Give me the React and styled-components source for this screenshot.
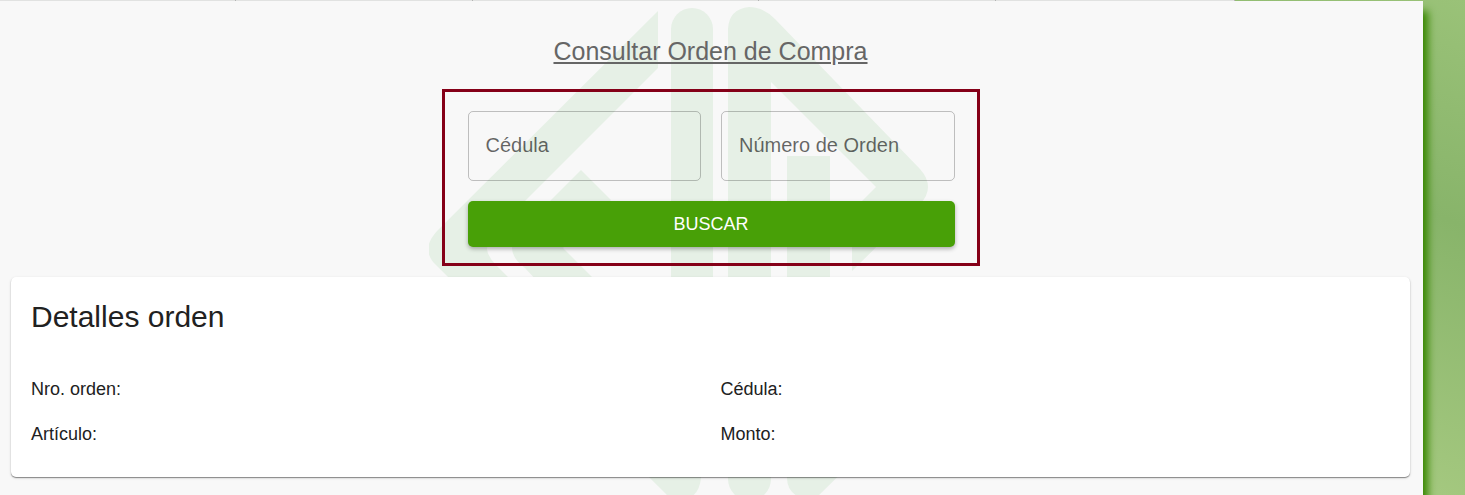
import React, {useState} from 'react'
import styled, {createGlobalStyle} from 'styled-components'

const tabs = [235, 236, 286, 236, 238]

const details = ['Nro. orden:', 'Cédula:', 'Artículo:', 'Monto:']

const Field = ({id, label, value, onChange}) => (
    <FieldContainer>
        <FieldInput id={id} value={value} onChange={e => onChange(e.target.value)}/>
        <FieldLabel htmlFor={id} $hidden={value !== ''}>{label}</FieldLabel>
    </FieldContainer>
)

const Logo = () => (
    <LogoLayer aria-hidden="true">
        <svg width="566" height="506" viewBox="429 1 566 506" fill="#e6f0e6">
            <path d="M658 11V68L501 225Q487 237 487 249Q488 257 496 265L701 470V478Q699 499 680 500Q670 499 665 493L437 266Q428 258 428 248Q429 240 437 231Z"/>
            <path d="M581 170L611 200L563 248L671 356V424L525 268Q512 258 512 248Q512 240 522 229Z"/>
            <path d="M671 29A21 21 0 0 1 713 29V440H671Z"/>
            <path d="M728 29Q729 9 749 7Q763 7 775 19L920 169Q928 178 928 187Q928 196 920 204L852 271V211L876 187L771 82V479A21 21 0 0 1 728 479Z"/>
            <path d="M787 156H830V440H875L816 498Q808 502 801 498Q787 492 787 478Z"/>
        </svg>
    </LogoLayer>
)

const App = () => {
    const [cedula, setCedula] = useState('')
    const [orden, setOrden] = useState('')

    return (
    <>
        <GlobalStyle/>
        <Tabs>
            {tabs.map((size, index) => <Tab key={index} $size={size}/>)}
        </Tabs>
        <Page>
            <Logo/>
            <Title>Consultar Orden de Compra</Title>
            <SearchForm onSubmit={e => e.preventDefault()}>
                <Field id="cedula" label="Cédula" value={cedula} onChange={setCedula}/>
                <Field id="orden" label="Número de Orden" value={orden} onChange={setOrden}/>
                <SearchButton type="submit">BUSCAR</SearchButton>
            </SearchForm>
            <Card>
                <CardTitle>Detalles orden</CardTitle>
                <Details>
                    {details.map(text => <Detail key={text}>{text}</Detail>)}
                </Details>
            </Card>
        </Page>
    </>
    )
}

const GlobalStyle = createGlobalStyle`
    * {
        box-sizing: border-box;
    }
    body {
        margin: 0;
        min-height: 100vh;
        font-family: "Liberation Sans", Arial, sans-serif;
        background: linear-gradient(200deg, #9ac278 0%, #88b46a 22%, #a4c87f 49%);
    }
    #root {
        display: flex;
        flex-direction: column;
        min-height: 100vh;
        overflow: hidden;
    }
`

const Tabs = styled.div`
    display: flex;
    height: 1px;
    margin-right: 230px;
`

const Tab = styled.div`
    flex: ${props => props.$size} 1 0;
    background: #e2e2e2;
    border-right: 1px solid #b4b4b4;
`

const Page = styled.main`
    position: relative;
    flex: 1;
    display: flex;
    flex-direction: column;
    align-items: center;
    margin-right: 42px;
    padding: 34px 13px 18px 11px;
    background: #f8f8f8;
    box-shadow: 5px 10px 8px #388700;
`

const LogoLayer = styled.div`
    position: absolute;
    inset: 0;
    display: flex;
    justify-content: center;
    overflow: hidden;

    svg {
        flex: none;
    }
`

const Title = styled.h1`
    position: relative;
    margin: 0 0 22px;
    font-size: 25px;
    line-height: 32px;
    font-weight: 400;
    color: #666666;
    text-decoration: underline;
`

const SearchForm = styled.form`
    position: relative;
    display: grid;
    grid-template-columns: 1fr 1fr;
    gap: 20px;
    width: 100%;
    max-width: 538px;
    margin-bottom: 11px;
    padding: 19px 22px 16px 23px;
    border: 3px solid #850018;
`

const FieldContainer = styled.div`
    position: relative;
    min-width: 0;
`

const FieldInput = styled.input`
    display: block;
    width: 100%;
    height: 70px;
    padding: 0 17px;
    border: 1px solid rgba(0, 0, 0, 0.23);
    border-radius: 5px;
    background: transparent;
    font-family: inherit;
    font-size: 20px;
    color: #212121;
`

const FieldLabel = styled.label`
    position: absolute;
    top: 20px;
    left: 18px;
    font-size: 20px;
    line-height: 29px;
    color: rgba(0, 0, 0, 0.6);
    pointer-events: none;
    visibility: ${props => props.$hidden ? 'hidden' : 'visible'};
`

const SearchButton = styled.button`
    grid-column: 1 / -1;
    height: 46px;
    padding: 0 20px;
    border: 0;
    border-radius: 5px;
    background: #48a007;
    box-shadow: 0 2px 4px rgba(0, 0, 0, 0.3);
    font-family: inherit;
    font-size: 18px;
    font-weight: 400;
    color: #ffffff;
    cursor: pointer;
`

const Card = styled.section`
    position: relative;
    width: 100%;
    padding: 20px 20px 30px;
    border-radius: 5px;
    background: #ffffff;
    box-shadow: 0 1px 1px rgba(0, 0, 0, 0.4), 0 1px 3px rgba(0, 0, 0, 0.14);
`

const CardTitle = styled.h2`
    margin: 0 0 40px;
    font-size: 30px;
    line-height: 40px;
    font-weight: 400;
    color: #212121;
`

const Details = styled.div`
    display: grid;
    grid-template-columns: 1fr 1fr;
    gap: 20px;
`

const Detail = styled.p`
    margin: 0;
    font-size: 18px;
    line-height: 25px;
    color: #212121;
`

export default App
